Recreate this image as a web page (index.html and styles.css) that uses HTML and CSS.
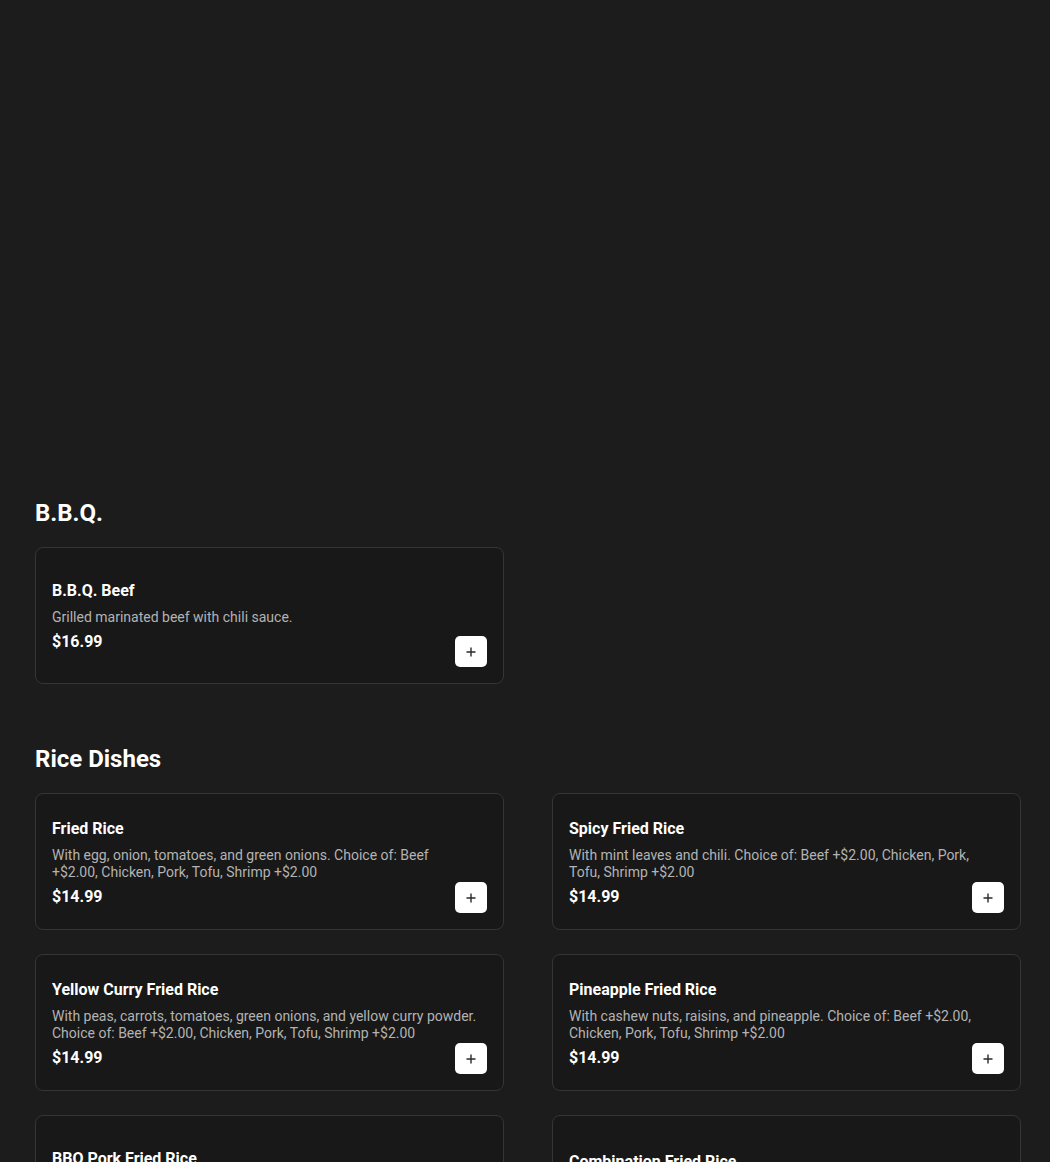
FILE: index.html
```html
<!DOCTYPE html>
<html lang="en">
<head>
<meta charset="utf-8">
<title>Menu</title>
<link rel="stylesheet" href="styles.css">
</head>
<body>
<main class="menu">
  <div class="hero"></div>

  <section class="category">
    <h2 class="category-title">B.B.Q.</h2>
    <div class="grid">
      <article class="card">
        <div class="card-body">
          <h3 class="item-name">B.B.Q. Beef</h3>
          <p class="item-desc">Grilled marinated beef with chili sauce.</p>
          <p class="item-price">$16.99</p>
        </div>
        <button class="add-btn" aria-label="Add"><svg viewBox="0 0 12 12" width="12" height="12"><path d="M6 1.5v9M1.5 6h9" stroke="#2a2a2a" stroke-width="1.4" fill="none"/></svg></button>
      </article>
    </div>
  </section>

  <section class="category">
    <h2 class="category-title">Rice Dishes</h2>
    <div class="grid">
      <article class="card">
        <div class="card-body">
          <h3 class="item-name">Fried Rice</h3>
          <p class="item-desc">With egg, onion, tomatoes, and green onions. Choice of: Beef +$2.00, Chicken, Pork, Tofu, Shrimp +$2.00</p>
          <p class="item-price">$14.99</p>
        </div>
        <button class="add-btn" aria-label="Add"><svg viewBox="0 0 12 12" width="12" height="12"><path d="M6 1.5v9M1.5 6h9" stroke="#2a2a2a" stroke-width="1.4" fill="none"/></svg></button>
      </article>
      <article class="card">
        <div class="card-body">
          <h3 class="item-name">Spicy Fried Rice</h3>
          <p class="item-desc">With mint leaves and chili. Choice of: Beef +$2.00, Chicken, Pork, Tofu, Shrimp +$2.00</p>
          <p class="item-price">$14.99</p>
        </div>
        <button class="add-btn" aria-label="Add"><svg viewBox="0 0 12 12" width="12" height="12"><path d="M6 1.5v9M1.5 6h9" stroke="#2a2a2a" stroke-width="1.4" fill="none"/></svg></button>
      </article>
      <article class="card">
        <div class="card-body">
          <h3 class="item-name">Yellow Curry Fried Rice</h3>
          <p class="item-desc">With peas, carrots, tomatoes, green onions, and yellow curry powder. Choice of: Beef +$2.00, Chicken, Pork, Tofu, Shrimp +$2.00</p>
          <p class="item-price">$14.99</p>
        </div>
        <button class="add-btn" aria-label="Add"><svg viewBox="0 0 12 12" width="12" height="12"><path d="M6 1.5v9M1.5 6h9" stroke="#2a2a2a" stroke-width="1.4" fill="none"/></svg></button>
      </article>
      <article class="card">
        <div class="card-body">
          <h3 class="item-name">Pineapple Fried Rice</h3>
          <p class="item-desc">With cashew nuts, raisins, and pineapple. Choice of: Beef +$2.00, Chicken, Pork, Tofu, Shrimp +$2.00</p>
          <p class="item-price">$14.99</p>
        </div>
        <button class="add-btn" aria-label="Add"><svg viewBox="0 0 12 12" width="12" height="12"><path d="M6 1.5v9M1.5 6h9" stroke="#2a2a2a" stroke-width="1.4" fill="none"/></svg></button>
      </article>
      <article class="card">
        <div class="card-body">
          <h3 class="item-name">BBQ Pork Fried Rice</h3>
          <p class="item-desc">With B.B.Q. pork, egg, onion, and green onions.</p>
          <p class="item-price">$15.99</p>
        </div>
        <button class="add-btn" aria-label="Add"><svg viewBox="0 0 12 12" width="12" height="12"><path d="M6 1.5v9M1.5 6h9" stroke="#2a2a2a" stroke-width="1.4" fill="none"/></svg></button>
      </article>
      <article class="card">
        <div class="card-body">
          <h3 class="item-name">Combination Fried Rice</h3>
          <p class="item-desc item-desc-short">Beef, chicken, and shrimp.</p>
          <p class="item-price">$16.99</p>
        </div>
        <button class="add-btn" aria-label="Add"><svg viewBox="0 0 12 12" width="12" height="12"><path d="M6 1.5v9M1.5 6h9" stroke="#2a2a2a" stroke-width="1.4" fill="none"/></svg></button>
      </article>
    </div>
  </section>
</main>
</body>
</html>
```

FILE: styles.css
```css
* {
  box-sizing: border-box;
}

html, body {
  margin: 0;
  padding: 0;
  background: #1c1c1c;
}

body {
  font-family: Roboto, "Liberation Sans", Arial, sans-serif;
  color: #ffffff;
}

.menu {
  width: 986px;
  margin-left: 35px;
}

.hero {
  height: 497px;
}

.category {
  margin-bottom: 59px;
}

.category-title {
  margin: 0 0 18px;
  font-size: 24px;
  font-weight: 700;
  line-height: 32px;
}

.grid {
  display: grid;
  grid-template-columns: 469px 469px;
  column-gap: 48px;
  row-gap: 24px;
}

.card {
  position: relative;
  display: flex;
  align-items: center;
  height: 137px;
  padding: 17px 26px 15px 16px;
  background: #181818;
  border: 1px solid #353535;
  border-radius: 8px;
}

.card-body {
  width: 100%;
}

.item-name {
  margin: 0 0 8px;
  font-size: 16px;
  font-weight: 700;
  line-height: 20px;
}

.item-desc {
  margin: 0 0 6px;
  font-size: 14px;
  line-height: 17px;
  color: #b3b3b3;
}

.item-desc-short {
  margin-bottom: 0;
}

.item-price {
  margin: 0;
  font-size: 16px;
  font-weight: 700;
  line-height: 20px;
}

.add-btn {
  position: absolute;
  right: 16px;
  bottom: 16px;
  width: 32px;
  height: 31px;
  padding: 0;
  display: flex;
  align-items: center;
  justify-content: center;
  background: #ffffff;
  border: none;
  border-radius: 5px;
}

.add-btn svg {
  display: block;
}
```
